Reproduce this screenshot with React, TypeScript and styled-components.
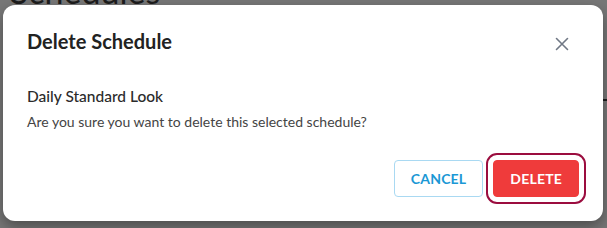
import styled, { createGlobalStyle } from 'styled-components';

const GlobalStyle = createGlobalStyle`
  html, body {
    margin: 0;
    padding: 0;
    background: #777777;
  }
  body {
    font-family: Lato, "Open Sans", sans-serif;
  }
`;

const Screen = styled.div`
  position: relative;
  width: 607px;
  height: 228px;
  overflow: hidden;
  background: #777777;
`;

// page behind the overlay
const BackPage = styled.div`
  display: flex;
  flex-direction: column;
  padding-left: 10px;
`;

const PageTitle = styled.h1`
  margin: -27px 0 0 0;
  font-size: 34px;
  font-weight: 400;
  line-height: 36px;
  color: #1c1c1c;
`;

const PageRule = styled.div`
  margin-top: 90px;
  height: 2px;
  background: #1c1c1c;
`;

const Modal = styled.div`
  position: absolute;
  left: 3px;
  top: 5px;
  width: 600px;
  height: 216px;
  box-sizing: border-box;
  background: #ffffff;
  border-radius: 12px;
  box-shadow: 0 6px 14px rgba(0, 0, 0, 0.35);
  padding: 21px 24px 0 24px;
  display: flex;
  flex-direction: column;
`;

const Header = styled.div`
  display: flex;
  align-items: center;
  justify-content: space-between;
  height: 30px;
`;

const Title = styled.h2`
  margin: 0;
  font-size: 20px;
  font-weight: 700;
  color: #222222;
`;

const CloseBtn = styled.button`
  display: flex;
  align-items: center;
  justify-content: center;
  width: 24px;
  height: 24px;
  margin: 6px 5px 0 0;
  padding: 0;
  border: none;
  background: none;
  cursor: pointer;
`;

const Body = styled.div`
  display: flex;
  flex-direction: column;
  margin-top: 30px;
`;

const ItemName = styled.div`
  font-size: 15.5px;
  font-weight: 500;
  color: #2b2b2b;
  line-height: 20px;
`;

const Message = styled.p`
  margin: 6px 0 0 0;
  font-size: 14px;
  line-height: 20px;
  color: #444444;
`;

const Footer = styled.div`
  display: flex;
  justify-content: flex-end;
  align-items: center;
  gap: 10px;
  margin-top: 28px;
`;

const Button = styled.button<{ $danger?: boolean }>`
  height: 37px;
  padding: 0 16px;
  min-width: 85px;
  border-radius: 4px;
  font-family: Lato, "Open Sans", sans-serif;
  font-size: 14px;
  font-weight: 700;
  letter-spacing: 0.2px;
  cursor: pointer;
  border: 1px solid ${(p) => (p.$danger ? '#ef3b3b' : '#a9d9f2')};
  background: ${(p) => (p.$danger ? '#ef3b3b' : '#ffffff')};
  color: ${(p) => (p.$danger ? '#ffffff' : '#1b98d5')};
  outline: ${(p) => (p.$danger ? '2px solid #9b0d3f' : 'none')};
  outline-offset: 5px;
`;

export default function App() {
  return (
    <Screen>
      <GlobalStyle />
      <BackPage>
        <PageTitle>Schedules</PageTitle>
        <PageRule />
      </BackPage>
      <Modal>
        <Header>
          <Title>Delete Schedule</Title>
          <CloseBtn aria-label="close">
            <svg width="14" height="14" viewBox="0 0 14 14">
              <path
                d="M1.5 1.5 L12.5 12.5 M12.5 1.5 L1.5 12.5"
                stroke="#707885"
                strokeWidth="1.6"
                strokeLinecap="round"
              />
            </svg>
          </CloseBtn>
        </Header>
        <Body>
          <ItemName>Daily Standard Look</ItemName>
          <Message>Are you sure you want to delete this selected schedule?</Message>
        </Body>
        <Footer>
          <Button>CANCEL</Button>
          <Button $danger>DELETE</Button>
        </Footer>
      </Modal>
    </Screen>
  );
}
